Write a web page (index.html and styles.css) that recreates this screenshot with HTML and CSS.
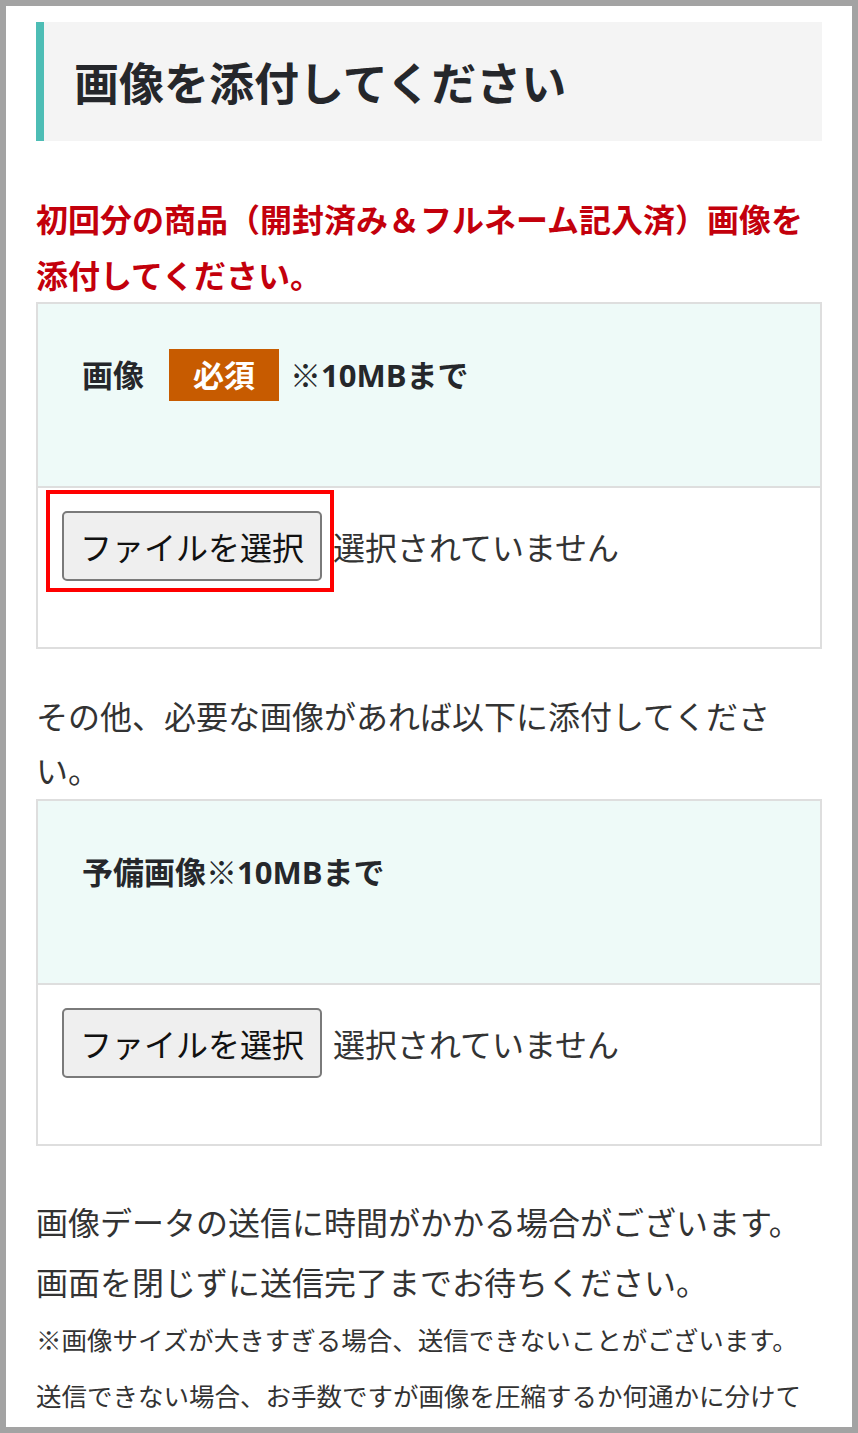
FILE: index.html
```html
<html>
<head>
  <title>画像を添付してください</title>
  <link rel="stylesheet" href="styles.css">
</head>
<body>
  <div class="frame">
    <h2 class="heading">画像を添付してください</h2>
    <p class="notice">初回分の商品（開封済み＆フルネーム記入済）画像を添付してください。</p>

    <div class="upload">
      <div class="upload-head">
        <span>画像</span>
        <span class="required">必須</span>
        <span class="limit">※10MBまで</span>
      </div>
      <div class="upload-body">
        <span class="marked"><button class="file-btn">ファイルを選択</button></span>
        <span class="file-name">選択されていません</span>
      </div>
    </div>

    <p class="text other">その他、必要な画像があれば以下に添付してください。</p>

    <div class="upload">
      <div class="upload-head">
        <span>予備画像※10MBまで</span>
      </div>
      <div class="upload-body">
        <button class="file-btn">ファイルを選択</button>
        <span class="file-name">選択されていません</span>
      </div>
    </div>

    <p class="text wait">画像データの送信に時間がかかる場合がございます。<br>画面を閉じずに送信完了までお待ちください。</p>
    <p class="small">※画像サイズが大きすぎる場合、送信できないことがございます。<br>送信できない場合、お手数ですが画像を圧縮するか何通かに分けて</p>
  </div>
</body>
</html>
```

FILE: styles.css
```css
* {
  font-family: "Noto Sans CJK JP", sans-serif;
  box-sizing: border-box;
}
body {
  margin: 0;
}
.frame {
  height: 1433px;
  overflow: hidden;
  border: 6px solid #a3a3a3;
  padding: 16px 30px 0;
  background: #fff;
  color: #333;
}
.heading {
  margin: 0;
  background: #f4f4f4;
  border-left: 8px solid #4dbdb5;
  padding: 28px 30px;
  font-size: 45px;
  line-height: 63px;
  font-weight: 700;
  color: #25272b;
}
.notice {
  margin: 49px 0 0;
  font-size: 32px;
  line-height: 56px;
  font-weight: 700;
  color: #c3000c;
}
.upload {
  border: 2px solid #dedede;
}
.upload-head {
  display: flex;
  align-items: flex-start;
  height: 184px;
  padding: 45px 44px 0;
  background: #eefaf8;
  border-bottom: 2px solid #dedede;
  font-size: 31px;
  font-weight: 700;
  line-height: 52px;
  color: #25272b;
}
.upload-head span {
  font-family: "Open Sans", "Noto Sans CJK JP", sans-serif;
}
.required {
  margin: 0 11px 0 25px;
  padding: 0 24px;
  background: #c75b00;
  color: #fff;
}
.upload-body {
  display: flex;
  align-items: flex-start;
  height: 159px;
  padding: 23px 24px 0;
}
.marked {
  position: relative;
  display: inline-block;
}
.marked::after {
  content: "";
  position: absolute;
  left: -16px;
  top: -21px;
  right: -12px;
  bottom: -11px;
  border: 4px solid #f00;
}
.file-btn {
  height: 70px;
  padding: 0 16px;
  background: #efefef;
  border: 2px solid #7a7a7a;
  border-radius: 5px;
  font-size: 32px;
  color: #111;
}
.file-name {
  margin-left: 11px;
  font-size: 32px;
  line-height: 70px;
  color: #333;
}
.text {
  font-size: 32px;
  color: #333;
}
.other {
  margin: 39px 0 3px;
  line-height: 54px;
}
.wait {
  margin: 45px 0 0;
  line-height: 60px;
}
.small {
  margin: 0;
  font-size: 25.5px;
  line-height: 56px;
  color: #333;
}
```
